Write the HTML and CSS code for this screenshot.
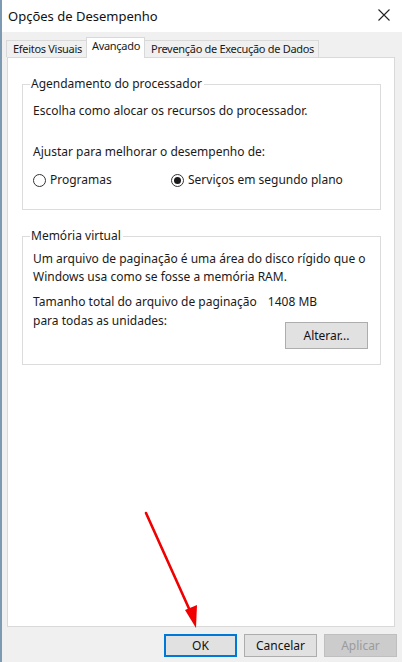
FILE: index.html
```html
<!DOCTYPE html>
<html lang="pt">
<head>
<meta charset="utf-8">
<title>Opções de Desempenho</title>
<link rel="stylesheet" href="styles.css">
</head>
<body>
<div class="window">
  <div class="titlebar">
    <span class="title">Opções de Desempenho</span>
    <svg class="close" width="12" height="12" viewBox="0 0 12 12"><path d="M0.5 0.5 L11.5 11.5 M11.5 0.5 L0.5 11.5" stroke="#222" stroke-width="1.1" fill="none"/></svg>
  </div>
  <div class="tabs">
    <div class="tab">Efeitos Visuais</div>
    <div class="tab active">Avançado</div>
    <div class="tab">Prevenção de Execução de Dados</div>
  </div>
  <div class="panel">
    <fieldset class="group g1">
      <legend>Agendamento do processador</legend>
      <p class="line l1">Escolha como alocar os recursos do processador.</p>
      <p class="line l2">Ajustar para melhorar o desempenho de:</p>
      <div class="radios">
        <label class="radio r1"><span class="dot"></span>Programas</label>
        <label class="radio r2"><span class="dot on"></span>Serviços em segundo plano</label>
      </div>
    </fieldset>
    <fieldset class="group g2">
      <legend>Memória virtual</legend>
      <p class="line">Um arquivo de paginação é uma área do disco rígido que o<br>Windows usa como se fosse a memória RAM.</p>
      <div class="sizes">
        <div class="row"><span>Tamanho total do arquivo de paginação</span><span class="mb">1408 MB</span></div>
        <div>para todas as unidades:</div>
      </div>
      <div class="alter-row"><button class="btn alter">Alterar...</button></div>
    </fieldset>
  </div>
  <div class="footer">
    <button class="btn ok">OK</button>
    <button class="btn">Cancelar</button>
    <button class="btn disabled">Aplicar</button>
  </div>
  <svg class="arrow" width="402" height="662" viewBox="0 0 402 662">
    <line x1="146" y1="513" x2="191" y2="613" stroke="#f00000" stroke-width="2.6" stroke-linecap="round"/>
    <polygon points="196,628 185,610 197,605" fill="#f00000"/>
  </svg>
</div>
</body>
</html>
```
FILE: styles.css
```css
* { box-sizing: border-box; }
html, body { margin: 0; padding: 0; }
body {
  width: 402px;
  height: 662px;
  overflow: hidden;
  font-family: "Noto Sans", "Open Sans", sans-serif;
  font-size: 12px;
  color: #1a1a1a;
  background: #f0f0f0;
}
.window {
  position: relative;
  width: 402px;
  height: 662px;
  border-left: 2px solid #7d9ab3;
  display: flex;
  flex-direction: column;
}
.titlebar {
  height: 32px;
  background: #ffffff;
  display: flex;
  align-items: center;
  justify-content: space-between;
  padding: 0 12px 0 6px;
  flex: none;
}
.title { font-size: 13px; color: #111; margin-top: -1px; }
.close { margin-top: -2px; }
.tabs {
  display: flex;
  align-items: flex-end;
  height: 25px;
  padding-left: 4px;
  flex: none;
}
.tab {
  height: 17px;
  padding: 0 4px 0 6px;
  border: 1px solid #d9d9d9;
  border-bottom: none;
  background: #f0f0f0;
  line-height: 15px;
  font-size: 11px;
  letter-spacing: -0.3px;
  margin-right: -1px;
}
.tab.active {
  background: #ffffff;
  position: relative;
  z-index: 1;
  margin-bottom: -1px;
  height: 21px;
  padding: 0 4px 0 5px;
}
.panel {
  margin: 0 7px 0 5px;
  height: 570px;
  background: #ffffff;
  border: 1px solid #d9d9d9;
  padding: 18px 13px 0 14px;
  flex: none;
}
.group {
  margin: 0;
  border: 1px solid #dcdcdc;
  padding: 0 10px 0 10px;
}
.group legend {
  padding: 0 2px 0 1px;
  margin-left: -3px;
  line-height: 16px;
}
.line { margin: 0; line-height: 18px; }
.g1 { height: 134px; }
.g1 .l1 { margin-top: 10px; }
.g1 .l2 { margin-top: 23px; }
.radios { display: flex; margin-top: 10px; }
.radio { display: flex; align-items: center; gap: 4px; line-height: 18px; }
.r1 { width: 138px; }
.dot {
  width: 13px; height: 13px;
  border: 1px solid #333;
  border-radius: 50%;
  background: #fff;
  position: relative;
}
.dot.on::after {
  content: "";
  position: absolute;
  left: 2px; top: 2px;
  width: 7px; height: 7px;
  border-radius: 50%;
  background: #1a1a1a;
}
.g2 { margin-top: 18px; height: 137px; }
.g2 .line { margin-top: 6px; }
.sizes { margin-top: 6px; line-height: 19px; }
.row { display: flex; }
.mb { margin-left: 11px; }
.alter-row { display: flex; justify-content: flex-end; margin-top: -8px; margin-right: 2px; }
.btn {
  font-family: inherit;
  font-size: 12px;
  color: #111;
  background: #e1e1e1;
  border: 1px solid #adadad;
  width: 73px;
  height: 23px;
  padding: 0;
}
.alter { width: 83px; height: 27px; }
.footer {
  display: flex;
  justify-content: flex-end;
  gap: 7px;
  padding: 7px 5px 0 0;
}
.btn.ok { border: 2px solid #0078d7; }
.btn.disabled { color: #9b9b9b; background: #cccccc; border-color: #bfbfbf; }
.arrow { position: absolute; left: -2px; top: 0; pointer-events: none; }
```
